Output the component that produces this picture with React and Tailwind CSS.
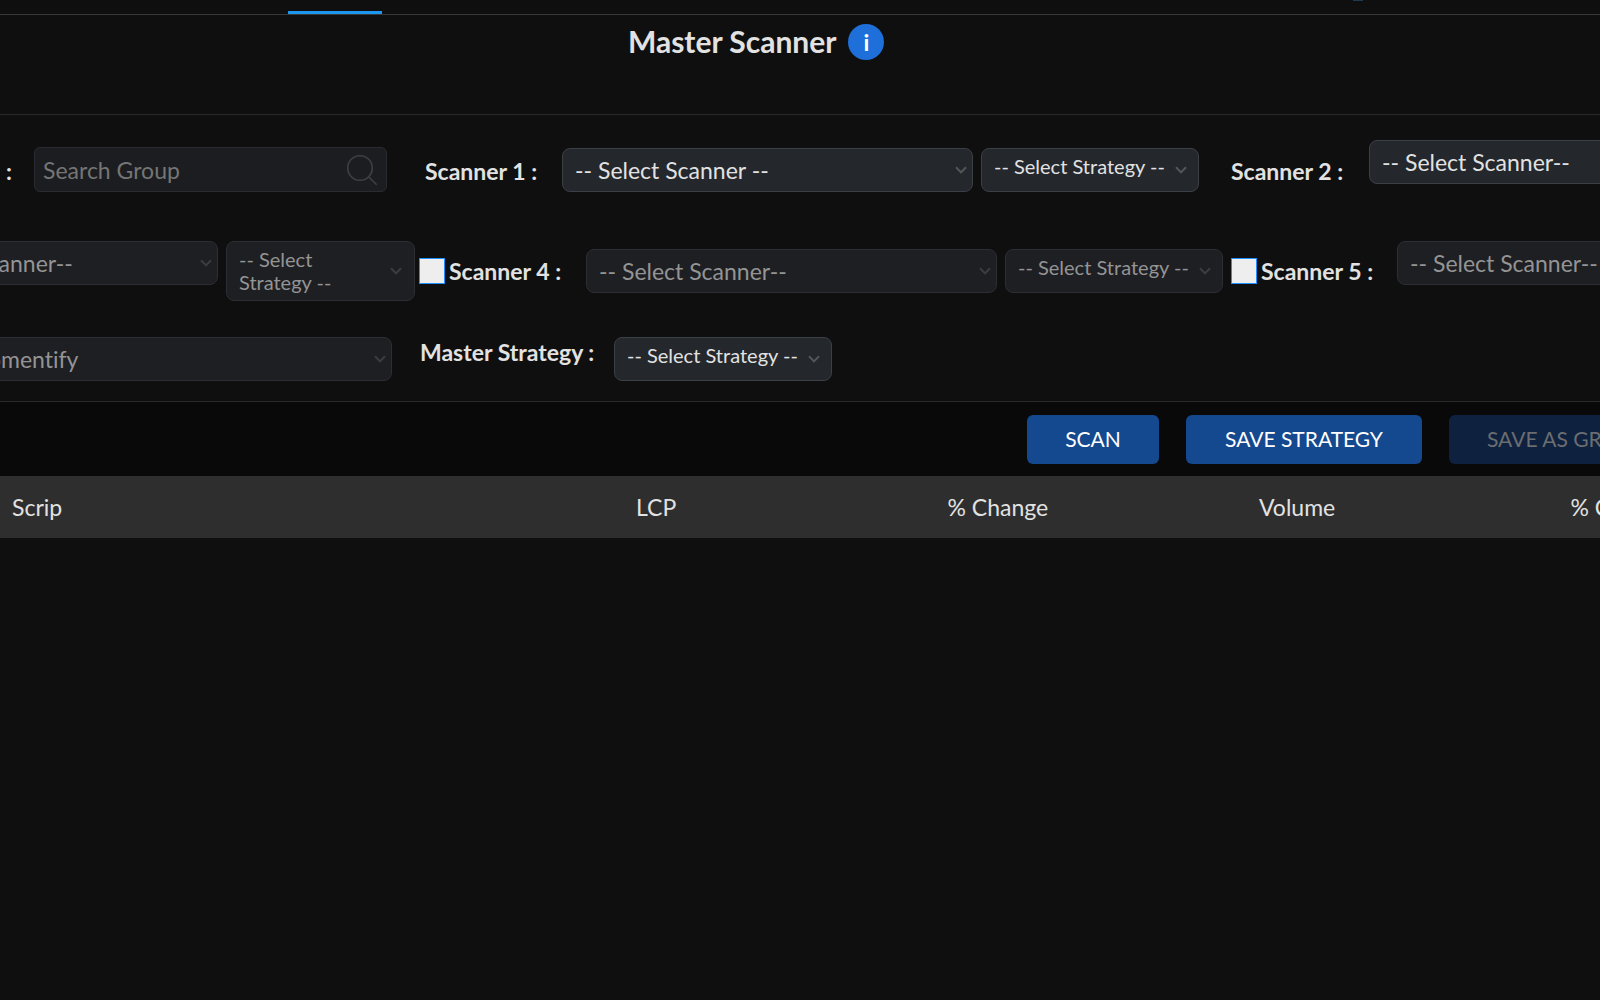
const enabledBox = 'border-[#3b3f46] bg-[#24272c] text-[#e2e2e2]'
const disabledBox = 'border-[#2c2e33] bg-[#1e1f23] text-[#949494]'

const columns = ['LCP', '% Change', 'Volume', '% Change']

function Chevron({ disabled, className }) {
  return (
    <svg
      viewBox="0 0 12 8"
      className={`pointer-events-none absolute top-1/2 h-2 w-3 -translate-y-1/2 ${className} ${disabled ? 'text-[#3c3d40]' : 'text-[#55565a]'}`}
      fill="none"
      stroke="currentColor"
      strokeWidth="2"
    >
      <path d="M1 1.2 6 6.4 11 1.2" />
    </svg>
  )
}

function ScannerSelect({ id, label, text = '-- Select Scanner--', width = 'w-[411px]', disabled = false }) {
  return (
    <div className={`relative shrink-0 ${width}`}>
      <select
        id={id}
        aria-label={label}
        disabled={disabled}
        className={`h-11 w-full appearance-none rounded-lg border px-3 text-[23px] opacity-100 ${disabled ? disabledBox : enabledBox}`}
      >
        <option>{text}</option>
      </select>
      <Chevron disabled={disabled} className="right-1.5" />
    </div>
  )
}

function StrategySelect({ id, label, disabled = false }) {
  return (
    <div className="relative w-[218px] shrink-0">
      <select
        id={id}
        aria-label={label}
        disabled={disabled}
        className={`h-11 w-full appearance-none rounded-lg border pb-2 pl-3 pr-8 text-xl opacity-100 ${disabled ? disabledBox : enabledBox}`}
      >
        <option>-- Select Strategy --</option>
      </select>
      <Chevron disabled={disabled} className="right-3" />
    </div>
  )
}

function ScannerToggle({ id, children }) {
  return (
    <div className="flex h-[26px] shrink-0 items-center gap-1">
      <input
        id={id}
        type="checkbox"
        className="size-[26px] appearance-none border border-[#1e90ff] bg-[#eeeeee]"
      />
      <label htmlFor={id} className="whitespace-nowrap text-[23px] font-bold">
        {children}
      </label>
    </div>
  )
}

export default function App() {
  return (
    <div className="min-h-screen overflow-hidden bg-[#0f0f0f] font-['Lato','Open_Sans',sans-serif] text-[#e2e2e2] [font-variant-ligatures:none]">
      {/* Navigation strip */}
      <nav className="flex h-[15px] items-end border-b border-[#38393b] pl-72">
        <div className="h-[3px] w-[94px] shrink-0 bg-[#1c96ee]" />
        <div className="ml-[971px] h-px w-2.5 shrink-0 self-start bg-[#1c3a52]" />
      </nav>

      {/* Title */}
      <header className="flex h-[100px] items-start gap-3 border-b border-[#2a2a2e] pl-[628px] pt-[9px]">
        <h1 className="whitespace-nowrap text-3xl font-bold leading-[34px]">Master Scanner</h1>
        <button
          type="button"
          aria-label="About the master scanner"
          className="flex size-9 items-center justify-center rounded-full bg-[#1f6fdb] text-[23px] font-bold text-white"
        >
          i
        </button>
      </header>

      {/* Filters */}
      <section className="border-b border-[#2a2a2e] pb-5 pt-[25px]">
        <div className="flex items-start">
          <label htmlFor="group" className="w-[34px] shrink-0 pl-1.5 pt-4 text-[23px] font-bold leading-[30px]">
            :
          </label>
          <div className="relative mt-[7px] w-[353px] shrink-0">
            <input
              id="group"
              type="text"
              placeholder="Search Group"
              className="h-[45px] w-full rounded-md border border-[#2a2b30] bg-[#1c1d20] px-2 text-[23px] placeholder:text-[#757575]"
            />
            <svg
              viewBox="0 0 32 32"
              className="pointer-events-none absolute right-[9px] top-[7px] size-8 text-[#3f4043]"
              fill="none"
              stroke="currentColor"
              strokeWidth="1.6"
            >
              <circle cx="14" cy="14" r="12.3" />
              <path d="m22.6 22.8 8 8" />
            </svg>
          </div>
          <label htmlFor="scanner-1" className="w-[175px] shrink-0 pl-[38px] pt-4 text-[23px] font-bold leading-[30px]">
            Scanner 1 :
          </label>
          <div className="flex shrink-0 gap-2 pt-2">
            <ScannerSelect id="scanner-1" text="-- Select Scanner --" />
            <StrategySelect label="Strategy for scanner 1" />
          </div>
          <label htmlFor="scanner-2" className="w-[170px] shrink-0 pl-8 pt-4 text-[23px] font-bold leading-[30px]">
            Scanner 2 :
          </label>
          <ScannerSelect id="scanner-2" />
        </div>

        <div className="mt-[49px] flex items-start">
          <div className="-ml-32 flex shrink-0 items-start gap-2">
            <ScannerSelect label="Scanner 3" width="w-[346px]" disabled />
            <button
              type="button"
              aria-haspopup="listbox"
              disabled
              className={`relative w-[189px] rounded-lg border py-1.5 pl-3 pr-16 text-left text-xl leading-[23px] ${disabledBox}`}
            >
              -- Select Strategy --
              <Chevron disabled className="right-3" />
            </button>
          </div>
          <div className="w-[171px] shrink-0 pl-1 pt-[17px]">
            <ScannerToggle id="use-scanner-4">Scanner 4 :</ScannerToggle>
          </div>
          <div className="flex shrink-0 gap-2 pt-2">
            <ScannerSelect label="Scanner 4" disabled />
            <StrategySelect label="Strategy for scanner 4" disabled />
          </div>
          <div className="w-[174px] shrink-0 pl-2 pt-[17px]">
            <ScannerToggle id="use-scanner-5">Scanner 5 :</ScannerToggle>
          </div>
          <ScannerSelect label="Scanner 5" disabled />
        </div>

        <div className="mt-9 flex items-start">
          <div className="-ml-[46px] shrink-0">
            <ScannerSelect label="Group source" text="Momentify" width="w-[438px]" disabled />
          </div>
          <label htmlFor="master-strategy" className="w-[222px] shrink-0 pl-7 text-[23px] font-bold leading-[30px]">
            Master Strategy :
          </label>
          <StrategySelect id="master-strategy" />
        </div>
      </section>

      {/* Actions */}
      <div className="flex h-[74px] items-center gap-[27px] bg-[#090909] pl-[1027px] text-[21px] text-white">
        <button type="button" className="h-[49px] w-[132px] shrink-0 rounded-md bg-[#14488f]">
          SCAN
        </button>
        <button type="button" className="h-[49px] w-[236px] shrink-0 rounded-md bg-[#14488f]">
          SAVE STRATEGY
        </button>
        <button
          type="button"
          disabled
          className="h-[49px] shrink-0 whitespace-nowrap rounded-md bg-[#0e213f] px-[38px] text-[#6b6d70]"
        >
          SAVE AS GROUP
        </button>
      </div>

      {/* Results */}
      <table className="w-[1870px] table-fixed text-left text-[23px]">
        <thead className="bg-[#2e2e2e]">
          <tr className="h-[62px]">
            <th className="w-[624px] pl-3 font-normal">Scrip</th>
            {columns.map((name, index) => (
              <th key={index} className="whitespace-nowrap pl-3 font-normal">
                {name}
              </th>
            ))}
          </tr>
        </thead>
        <tbody />
      </table>
    </div>
  )
}
